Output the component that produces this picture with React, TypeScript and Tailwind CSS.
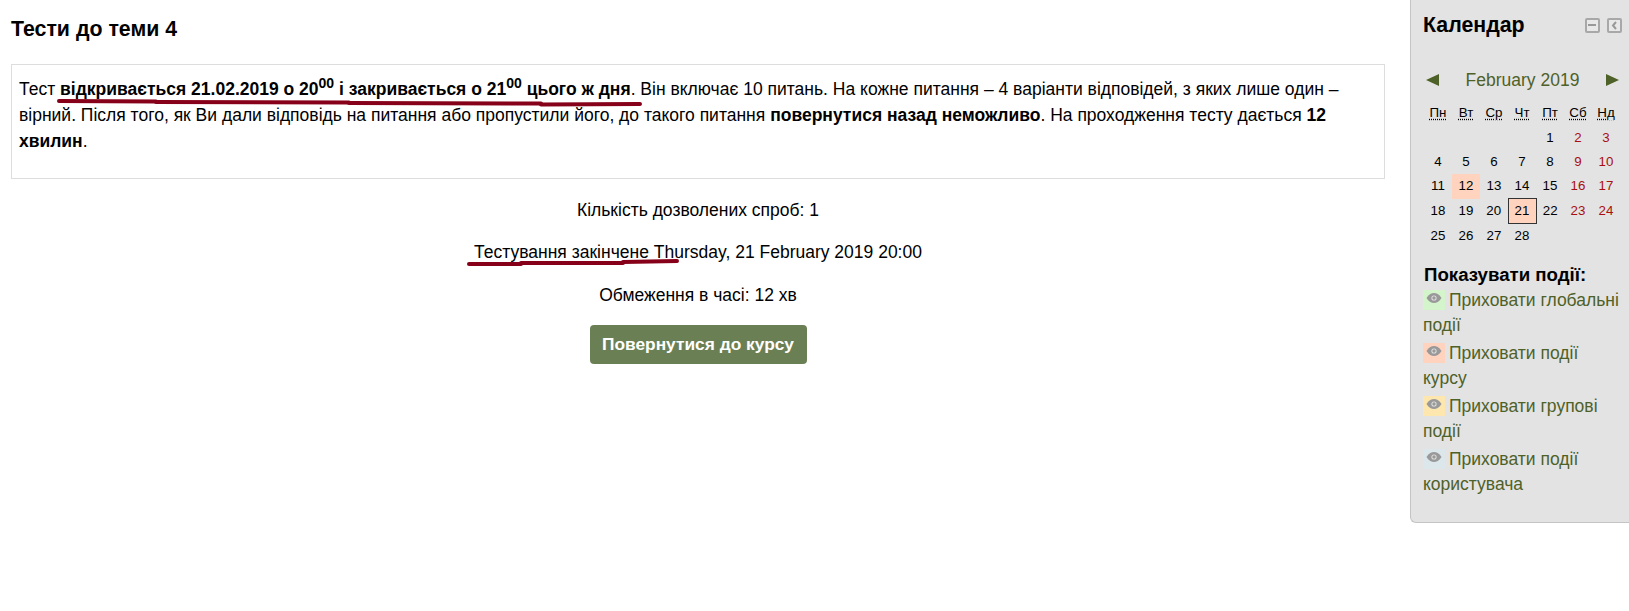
import type { ReactNode } from 'react'

const weekDays = ['Пн', 'Вт', 'Ср', 'Чт', 'Пт', 'Сб', 'Нд']

const weeks: (number | null)[][] = [
  [null, null, null, null, 1, 2, 3],
  [4, 5, 6, 7, 8, 9, 10],
  [11, 12, 13, 14, 15, 16, 17],
  [18, 19, 20, 21, 22, 23, 24],
  [25, 26, 27, 28, null, null, null],
]

const eventFilters = [
  { label: 'Приховати глобальні події', swatch: 'bg-[#d4f5cc]' },
  { label: 'Приховати події курсу', swatch: 'bg-[#ffd3bd]' },
  { label: 'Приховати групові події', swatch: 'bg-[#fee7ae]' },
  { label: 'Приховати події користувача', swatch: 'bg-[#dce7ec]' },
]

function Underline({ className, points }: { className: string; points: string[] }) {
  return (
    <svg className={`absolute pointer-events-none ${className}`} fill="none">
      {points.map(d => (
        <path key={d} d={d} stroke="#850018" strokeWidth="4" strokeLinecap="round" />
      ))}
    </svg>
  )
}

function EyeIcon() {
  return (
    <svg width="16" height="10" viewBox="0 0 16 10" className="mx-auto mt-[3px]">
      <path d="M0.5 5C3 1.2 5.5 0 8 0s5 1.2 7.5 5C13 8.8 10.5 10 8 10S3 8.8 0.5 5z" fill="#999" />
      <circle cx="8" cy="5" r="2.6" fill="#e3e3e3" />
      <circle cx="8" cy="5" r="1.7" fill="#999" />
    </svg>
  )
}

function BlockButton({ children }: { children: ReactNode }) {
  return (
    <span className="flex h-[15px] w-[15px] items-center justify-center rounded-[2px] border-2 border-[#a8a8a8] bg-[#e8e8e8]">
      {children}
    </span>
  )
}

function DayCell({ day }: { day: number | null }) {
  if (day === null) return <td />
  const weekend = (day + 3) % 7 === 5 || (day + 3) % 7 === 6
  const course = day === 12 || day === 21
  return (
    <td
      className={`h-[24px] w-[28px] p-0 text-center text-[13.33px] leading-[24px]
        ${weekend ? 'text-[#a90f0f]' : 'text-black'}
        ${course ? 'bg-[#ffd3bd] text-[#4e6128]' : ''}
        ${day === 21 ? 'h-[25px] border border-[#333]' : ''}`}
    >
      {day}
    </td>
  )
}

export default function App() {
  return (
    <div className="flex h-[611px] w-[1629px] items-start overflow-hidden bg-white font-['Liberation_Sans',Arial,sans-serif] text-[17.5px] text-black">
      <main className="relative ml-[11px] mr-[25px] flex-1">
        <h2 className="mt-[18px] text-[21.33px] leading-[23px] font-bold">Тести до теми 4</h2>

        <div className="mt-[23px] h-[115px] border border-[#dddddd] px-[7px] pt-[11px] leading-[26px]">
          Тест{' '}
          <b>
            відкривається 21.02.2019 о 20<sup className="text-[14px] leading-none">00</sup> і закривається о 21
            <sup className="text-[14px] leading-none">00</sup> цього ж дня
          </b>
          . Він включає 10 питань. На кожне питання – 4 варіанти відповідей, з яких лише один – вірний. Після того, як
          Ви дали відповідь на питання або пропустили його, до такого питання <b>повернутися назад неможливо</b>. На
          проходження тесту дається <b>12 хвилин</b>.
        </div>

        <div className="mt-[18px] flex flex-col items-center">
          <p className="leading-[26px]">Кількість дозволених спроб: 1</p>
          <p className="mt-[16px] leading-[26px]">Тестування закінчене Thursday, 21 February 2019 20:00</p>
          <p className="mt-[17px] leading-[26px]">Обмеження в часі: 12 хв</p>
          <button className="mt-[17px] h-[39px] w-[217px] rounded-[4px] bg-[#6b7f54] text-[17.33px] font-bold text-white">
            Повернутися до курсу
          </button>
        </div>

        <Underline
          className="left-[46px] top-[97px] h-[12px] w-[600px]"
          points={['M2 4L99 4.5', 'M99 5L292 5.5', 'M292 6L484 6.5', 'M484 7.5L583 7']}
        />
        <Underline
          className="left-[456px] top-[257px] h-[12px] w-[220px]"
          points={['M2 7L54 7', 'M54 6L156 6', 'M156 5L210 4']}
        />
      </main>

      <aside className="h-[523px] w-[219px] shrink-0 rounded-bl-[6px] border-b border-l border-[#c4c4c4] bg-[#e3e3e3] pl-[12px]">
        <div className="flex items-center pt-[12px]">
          <h3 className="text-[21.33px] leading-[26px] font-bold">Календар</h3>
          <div className="ml-[60px] flex gap-[7px]">
            <BlockButton>
              <span className="h-[2px] w-[8px] bg-[#999]" />
            </BlockButton>
            <BlockButton>
              <svg width="7" height="9" viewBox="0 0 7 9" fill="none">
                <path d="M5 1L2 4.5L5 8" stroke="#999" strokeWidth="2" />
              </svg>
            </BlockButton>
          </div>
        </div>

        <div className="mt-[30px] flex w-[196px] items-center justify-between pl-[3px]">
          <span className="h-0 w-0 border-y-[6px] border-r-[13px] border-y-transparent border-r-[#4e6128]" />
          <span className="text-[17.5px] leading-[24px] text-[#4e6128]">February 2019</span>
          <span className="h-0 w-0 border-y-[6px] border-l-[13px] border-y-transparent border-l-[#4e6128]" />
        </div>

        <table className="mt-[8px] ml-[1px] border-collapse">
          <thead>
            <tr>
              {weekDays.map(d => (
                <th key={d} className="h-[26px] w-[28px] p-0 text-center text-[13.33px] font-normal">
                  <span className="underline decoration-dotted underline-offset-2">{d}</span>
                </th>
              ))}
            </tr>
          </thead>
          <tbody>
            {weeks.map((week, i) => (
              <tr key={i}>
                {week.map((day, j) => (
                  <DayCell key={j} day={day} />
                ))}
              </tr>
            ))}
          </tbody>
        </table>

        <div className="mt-[15px] pl-[1px] text-[18.67px] leading-[24px] font-bold">Показувати події:</div>
        <ul className="mt-[1px] w-[201px]">
          {eventFilters.map(f => (
            <li key={f.label} className="mb-[3px] leading-[25px] text-[#4e6128]">
              <span className={`mr-[4px] inline-block h-[20px] w-[22px] align-[-4px] ${f.swatch}`}>
                <EyeIcon />
              </span>
              {f.label}
            </li>
          ))}
        </ul>
      </aside>
    </div>
  )
}
